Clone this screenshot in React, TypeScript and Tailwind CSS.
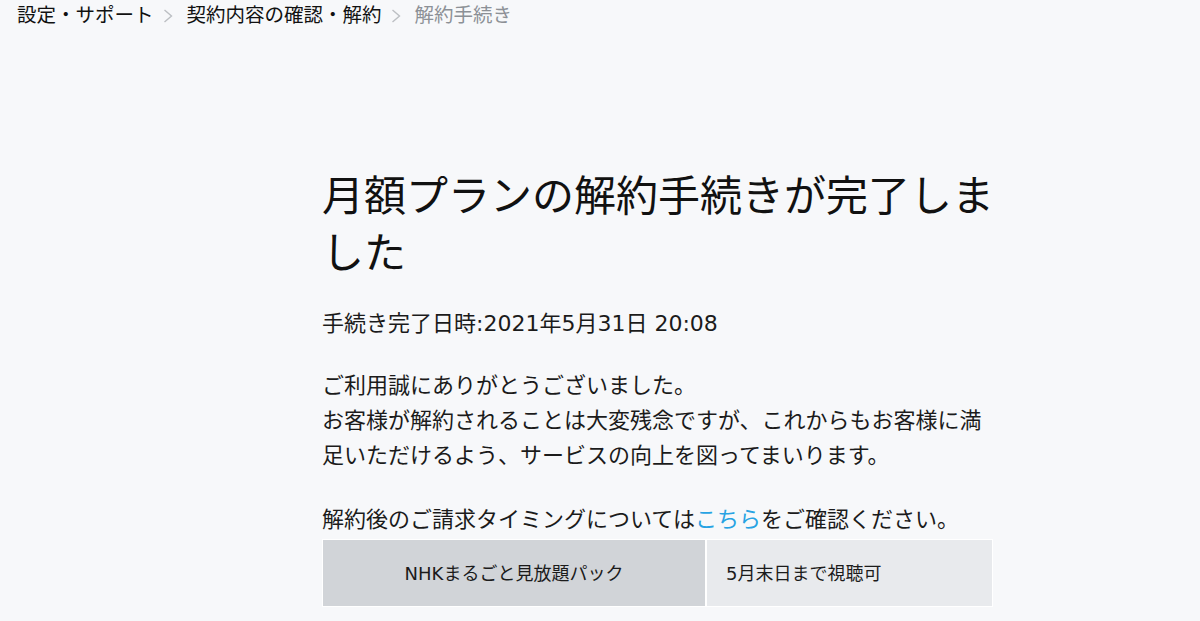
const crumbs = ['設定・サポート', '契約内容の確認・解約'];

function Chevron() {
  return (
    <svg width="10" height="14" viewBox="0 0 10 14" fill="none" className="ml-[9px] mr-[14px] text-[#bcbfc3]">
      <polyline points="1.5,1 8.5,7 1.5,13" stroke="currentColor" strokeWidth="1.4" />
    </svg>
  );
}

export default function App() {
  return (
    <div className="min-h-screen bg-[#f7f8fa] font-['DejaVu_Sans','Noto_Sans_CJK_JP',sans-serif] text-[#1b1b1b]">
      <nav className="flex h-[31px] items-center pl-[17px] text-[19.5px] leading-none">
        {crumbs.map((c) => (
          <div key={c} className="flex items-center">
            <span className="text-[#111]">{c}</span>
            <Chevron />
          </div>
        ))}
        <span className="text-[#8c9096]">解約手続き</span>
      </nav>

      <main className="pl-[322px]">
        <div className="w-[674px]">
          <h1 className="mt-[137px] text-[42px] leading-[57px] font-normal text-[#111]">
            月額プランの解約手続きが完了しました
          </h1>

          <p className="mt-[24px] text-[22px] leading-[35px]">手続き完了日時:2021年5月31日 20:08</p>

          <p className="mt-[27px] w-[672px] text-[22px] leading-[35px]">
            ご利用誠にありがとうございました。
            <br />
            お客様が解約されることは大変残念ですが、これからもお客様に満足いただけるよう、サービスの向上を図ってまいります。
          </p>

          <p className="mt-[29px] text-[22px] leading-[35px]">
            解約後のご請求タイミングについては
            <a href="#" className="text-[#27a3e3]">
              こちら
            </a>
            をご確認ください。
          </p>

          <div className="mt-[2px] flex w-[671px] gap-[2px] border border-white bg-white">
            <div className="flex h-[66px] w-[382px] items-center justify-center bg-[#d1d4d8] text-[18px]">
              NHKまるごと見放題パック
            </div>
            <div className="flex h-[66px] flex-1 items-center bg-[#e8eaed] pl-[19px] text-[18px]">
              5月末日まで視聴可
            </div>
          </div>
        </div>
      </main>
    </div>
  );
}
